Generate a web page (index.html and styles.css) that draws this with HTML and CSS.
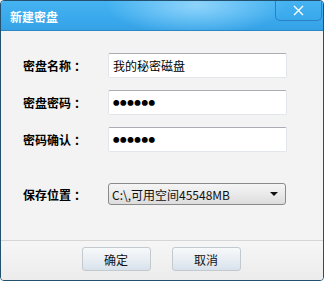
FILE: index.html
```html
<!DOCTYPE html>
<html lang="zh-CN">
<head>
    <meta charset="UTF-8">
    <meta name="viewport" content="width=device-width, initial-scale=1.0">
    <title>新建密盘</title>
    <link rel="stylesheet" href="styles.css">
</head>
<body>
    <div class="window">
        <div class="titlebar">
            <span class="title">新建密盘</span>
            <div class="close-btn">
                <svg width="11" height="11" viewBox="0 0 11 11">
                    <path d="M1 1 L10 10 M10 1 L1 10" stroke="#fff" stroke-width="1.4" fill="none"/>
                </svg>
            </div>
        </div>

        <div class="content">
            <div class="row">
                <label class="label">密盘名称<span class="colon">：</span></label>
                <div class="field">我的秘密磁盘</div>
            </div>
            <div class="row">
                <label class="label">密盘密码<span class="colon">：</span></label>
                <div class="field dots">●●●●●●</div>
            </div>
            <div class="row">
                <label class="label">密码确认<span class="colon">：</span></label>
                <div class="field dots">●●●●●●</div>
            </div>
            <div class="row select-row">
                <label class="label">保存位置<span class="colon">：</span></label>
                <div class="select">
                    <span>C:\,可用空间45548MB</span>
                    <span class="arrow"></span>
                </div>
            </div>
        </div>

        <div class="footer">
            <button class="btn">确定</button>
            <button class="btn">取消</button>
        </div>
    </div>
</body>
</html>
```

FILE: styles.css
```css
* {
    margin: 0;
    padding: 0;
    box-sizing: border-box;
    font-family: "Noto Sans CJK SC", "Liberation Sans", sans-serif;
}

body {
    background: #fff;
    width: 326px;
    height: 281px;
    overflow: hidden;
}

.window {
    width: 324px;
    height: 281px;
    border: 1px solid #24506f;
    border-radius: 4px;
    background: #f3f3f3;
    display: flex;
    flex-direction: column;
    overflow: hidden;
}

.titlebar {
    height: 30px;
    flex-shrink: 0;
    background: radial-gradient(ellipse 90px 30px at 195px 4px, #8fd4fb 0%, rgba(143, 212, 251, 0) 100%),
                linear-gradient(180deg, #45b3f1 0%, #3aa9ec 60%, #36a2e6 100%);
    border-bottom: 1px solid #2d86c4;
    display: flex;
    justify-content: space-between;
    align-items: flex-start;
    padding-left: 9px;
}

.title {
    color: #fff;
    font-size: 12px;
    font-weight: bold;
    line-height: 32px;
}

.close-btn {
    width: 47px;
    height: 20px;
    margin-right: 1px;
    border: 1px solid #2c7fc0;
    border-top: none;
    border-radius: 0 0 5px 5px;
    display: flex;
    justify-content: center;
    align-items: center;
}

.content {
    flex: 1;
    padding: 22px 0 0 22px;
    display: flex;
    flex-direction: column;
    gap: 12px;
}

.row {
    display: flex;
    align-items: center;
}

.select-row {
    margin-top: 19px;
}

.label {
    width: 85px;
    font-size: 12px;
    font-weight: bold;
    color: #000;
}

.colon {
    margin-left: 3px;
}

.field {
    width: 179px;
    height: 25px;
    background: #fff;
    border: 1px solid #e2e6ea;
    border-top-color: #abadb3;
    border-radius: 2px;
    font-size: 12px;
    color: #000;
    padding-left: 4px;
    line-height: 23px;
}

.dots {
    font-size: 6.5px;
    letter-spacing: 0.6px;
}

.select {
    width: 178px;
    height: 22px;
    background: linear-gradient(180deg, #f5f5f5 0%, #eaeaea 50%, #dcdcdc 100%);
    border: 1px solid #8a8a8a;
    border-radius: 3px;
    display: flex;
    justify-content: space-between;
    align-items: center;
    padding: 0 7px 0 3px;
    font-size: 12px;
    color: #111;
}

.arrow {
    width: 0;
    height: 0;
    border-left: 4px solid transparent;
    border-right: 4px solid transparent;
    border-top: 4px solid #111;
}

.footer {
    height: 40px;
    flex-shrink: 0;
    border-top: 1px solid #d5d5d5;
    background: linear-gradient(180deg, #f6f6f6 0%, #ececec 100%);
    display: flex;
    justify-content: center;
    gap: 21px;
    padding-top: 6px;
    padding-right: 2px;
}

.btn {
    width: 69px;
    height: 24px;
    border: 1px solid #c4c9ce;
    border-radius: 3px;
    background: linear-gradient(180deg, #f7f9fb 0%, #e9eef3 50%, #d8e2ec 100%);
    font-size: 12px;
    color: #111;
    cursor: pointer;
}
```
